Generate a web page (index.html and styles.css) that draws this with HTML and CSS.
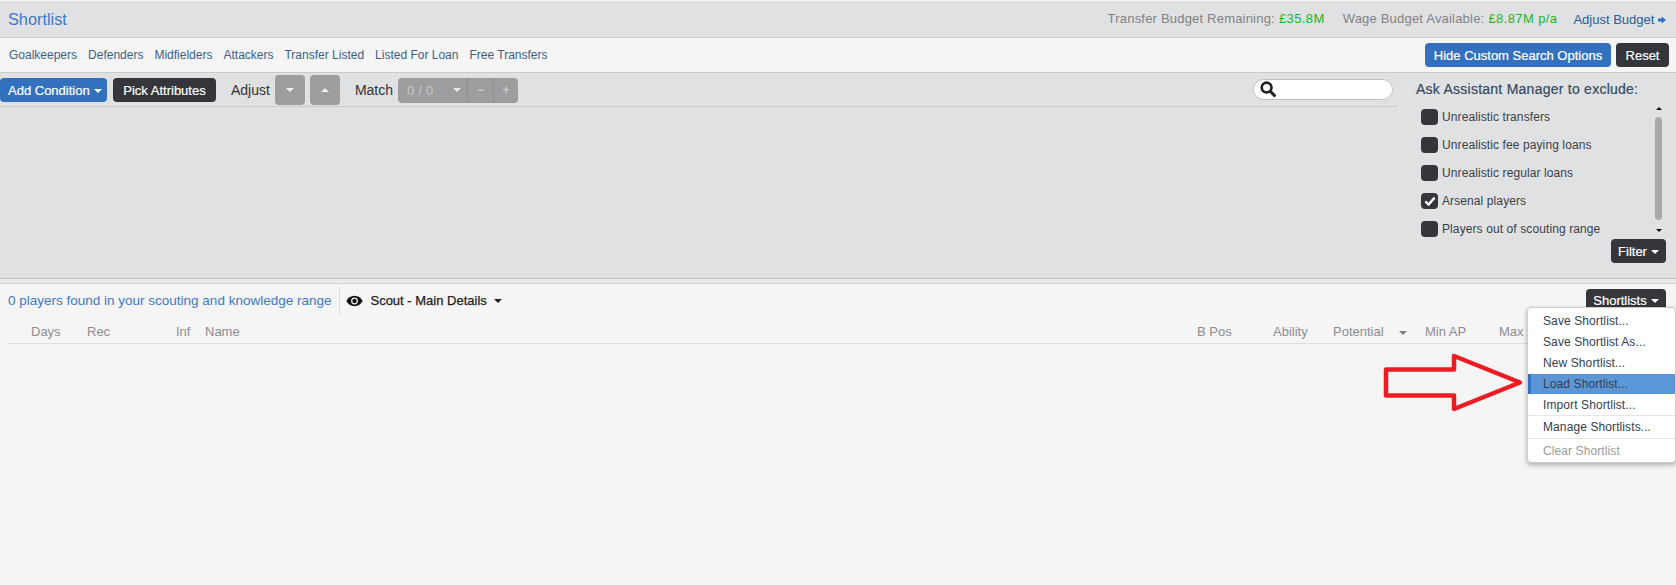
FILE: index.html
```html
<!DOCTYPE html>
<html lang="en">
<head>
<meta charset="utf-8">
<title>Shortlist</title>
<link rel="stylesheet" href="styles.css">
</head>
<body>
<div class="page">
  <header class="top">
    <a class="title">Shortlist</a>
    <div class="budget">
      <span class="lbl">Transfer Budget Remaining:</span><span class="money m1">£35.8M</span>
      <span class="lbl l2">Wage Budget Available:</span><span class="money m1">£8.87M p/a</span>
      <a class="adjust">Adjust Budget <svg class="adj-arrow" viewBox="0 0 8 8" width="8" height="8"><path d="M0 2.6h3.6V0.4L8 4 3.6 7.6V5.4H0z"/></svg></a>
    </div>
  </header>
  <nav class="tabs">
    <a>Goalkeepers</a><a>Defenders</a><a>Midfielders</a><a>Attackers</a><a>Transfer Listed</a><a>Listed For Loan</a><a>Free Transfers</a>
    <span class="tabs-right">
      <button class="btn blue hide-btn">Hide Custom Search Options</button>
      <button class="btn dark reset-btn">Reset</button>
    </span>
  </nav>
  <section class="filter">
    <div class="filter-main">
      <div class="toolbar">
        <button class="btn blue add-btn">Add Condition <i class="caret"></i></button>
        <button class="btn dark pick-btn">Pick Attributes</button>
        <span class="tool-label adjust-label">Adjust</span>
        <button class="sq"><i class="caret"></i></button>
        <button class="sq sq2"><i class="caret up"></i></button>
        <span class="tool-label match-label">Match</span>
        <div class="match">
          <span class="m-val">0 / 0<i class="caret"></i></span>
          <span class="m-op">−</span>
          <span class="m-op">+</span>
        </div>
        <div class="search">
          <svg viewBox="0 0 16 16" width="16" height="16"><circle cx="6.6" cy="6.6" r="4.9" fill="none" stroke="#222" stroke-width="2.7"/><path d="M10.2 10.2l4.2 4.2" stroke="#222" stroke-width="3" stroke-linecap="round"/></svg>
        </div>
      </div>
    </div>
    <aside class="exclude">
      <h3>Ask Assistant Manager to exclude:</h3>
      <div class="ex-body">
        <ul class="ex-list">
          <li><span class="cb"></span>Unrealistic transfers</li>
          <li><span class="cb"></span>Unrealistic fee paying loans</li>
          <li><span class="cb"></span>Unrealistic regular loans</li>
          <li><span class="cb"><svg viewBox="0 0 16 16" width="16" height="16"><path d="M3.4 8.4l3.2 3.2 6-7" fill="none" stroke="#fff" stroke-width="2.4"/></svg></span>Arsenal players</li>
          <li><span class="cb"></span>Players out of scouting range</li>
        </ul>
        <div class="scroll"><i class="s-up"></i><i class="s-thumb"></i><i class="s-down"></i></div>
      </div>
      <button class="btn dark filter-btn">Filter <i class="caret"></i></button>
    </aside>
  </section>
  <div class="split"></div>
  <section class="results">
    <div class="res-bar">
      <span class="found">0 players found in your scouting and knowledge range</span>
      <span class="view">
        <svg viewBox="0 0 18 12" width="17" height="12"><path d="M9 .5C5 .5 2 3 .3 6 2 9 5 11.5 9 11.5S16 9 17.7 6C16 3 13 .5 9 .5z" fill="#111"/><circle cx="9" cy="6" r="3.6" fill="#f5f5f5"/><circle cx="9" cy="6" r="2.3" fill="#111"/></svg>
        <b>Scout - Main Details</b><i class="caret black"></i>
      </span>
      <button class="btn dark lists-btn">Shortlists <i class="caret"></i></button>
    </div>
    <div class="cols">
      <span class="c-days">Days</span><span class="c-rec">Rec</span><span class="c-inf">Inf</span><span class="c-name">Name</span>
      <span class="c-pos">B Pos</span><span class="c-abi">Ability</span><span class="c-pot">Potential</span><i class="caret gray"></i><span class="c-min">Min AP</span><span class="c-max">Max AP</span>
    </div>
  </section>
</div>
<svg class="arrow" viewBox="0 0 146 62" width="146" height="62"><path d="M3 16.5H71V3L137 29.5 71 56V42.5H3z" fill="none" stroke="#ed1c24" stroke-width="4.5" stroke-linejoin="round"/></svg>
<ul class="menu">
  <li>Save Shortlist...</li>
  <li>Save Shortlist As...</li>
  <li>New Shortlist...</li>
  <li class="active">Load Shortlist...</li>
  <li>Import Shortlist...</li>
  <li class="sep manage">Manage Shortlists...</li>
  <li class="sep off">Clear Shortlist</li>
</ul>
</body>
</html>
```
FILE: styles.css
```css
* { box-sizing: border-box; }
html, body { margin: 0; height: 100%; }
body { font-family: "Liberation Sans", Arial, sans-serif; font-size: 13px; background: #f5f5f5; color: #333; overflow: hidden; position: relative; }
.page { display: flex; flex-direction: column; height: 585px; }
ul { list-style: none; margin: 0; padding: 0; }
button { font: inherit; border: 0; padding: 0; }

.top { height: 37px; margin-top: 1px; flex: none; background: #e0e1e3; border-bottom: 1px solid #c9cacb; display: flex; align-items: center; justify-content: space-between; padding: 0 10px 0 8px; }
.title { font-size: 16.3px; color: #3f78c9; margin-top: 1px; }
.budget { display: flex; align-items: center; font-size: 13px; color: #808285; letter-spacing: .2px; margin-top: -1px; }
.money { color: #1cb526; margin-left: 4px; letter-spacing: .4px; }
.l2 { margin-left: 18px; }
.adjust { color: #2a5a9f; margin-left: 16px; font-size: 13px; margin-top: 2px; white-space: nowrap; letter-spacing: 0; }
.adj-arrow { fill: #2f6fc0; }

.tabs { height: 35px; flex: none; background: #f5f5f5; border-bottom: 1px solid #c9cacb; display: flex; align-items: center; padding-left: 9px; gap: 11px; color: #3b5f8a; font-size: 12px; }
.tabs-right { margin-left: auto; display: flex; gap: 5px; padding-right: 7px; }

.btn { height: 24px; border-radius: 4px; color: #fff; font-size: 13px; display: inline-flex; align-items: center; justify-content: center; white-space: nowrap; -webkit-text-stroke: .2px #fff; }
.blue { background: #3371bf; }
.dark { background: #34363c; }
.caret { display: inline-block; width: 0; height: 0; border-left: 4px solid transparent; border-right: 4px solid transparent; border-top: 4px solid #fff; }
.caret.up { border-top: 0; border-bottom: 4px solid #fff; }
.caret.black { border-top-color: #222; }
.caret.gray { border-top-color: #808285; }
.btn .caret { margin-left: 4px; margin-top: 1px; }

.hide-btn { width: 186px; }
.reset-btn { width: 53px; }

.filter { height: 205px; flex: none; background: #e0e1e3; display: flex; }
.filter-main { width: 1397px; flex: none; }
.toolbar { height: 34px; border-bottom: 1px solid #c9cacb; display: flex; align-items: center; }
.add-btn { width: 107px; margin-top: 1px; justify-content: flex-start; padding-left: 8px; }
.pick-btn { width: 103px; margin-left: 6px; margin-top: 1px; }
.tool-label { font-size: 14px; color: #333; }
.adjust-label { margin-left: 15px; }
.match-label { margin-left: 15px; }
.sq { width: 30px; height: 30px; background: #9c9d9f; border-radius: 4px; margin-left: 5px; display: flex; align-items: center; justify-content: center; margin-top: 1px; }
.sq .caret { opacity: .85; }
.sq2 { margin-left: 5px; }
.match { margin-left: 5px; width: 120px; height: 25px; margin-top: 1px; background: #9c9d9f; border-radius: 4px; display: flex; color: #c9cacc; font-size: 13px; letter-spacing: .2px; }
.m-val { width: 70px; padding: 0 6px 0 9px; display: flex; align-items: center; justify-content: space-between; border-right: 1px solid #8d8e90; }
.m-val .caret { opacity: .8; }
.m-op { width: 25px; display: flex; align-items: center; justify-content: center; font-weight: bold; font-size: 12px; }
.m-op + .m-op { border-left: 1px solid #8d8e90; }
.search { margin-left: auto; margin-right: 4px; margin-top: -1px; width: 140px; height: 21px; background: #fff; border: 1px solid #bfc0c2; border-radius: 11px; display: flex; align-items: center; padding-left: 6px; }

.exclude { flex: 1; position: relative; padding-left: 19px; }
.exclude h3 { margin: 0; font-size: 14px; font-weight: normal; color: #34495e; height: 30px; line-height: 32px; letter-spacing: .25px; -webkit-text-stroke: .2px #34495e; }
.ex-body { display: flex; height: 140px; }
.ex-list { width: 239px; padding-left: 5px; }
.ex-list li { height: 28px; display: flex; align-items: center; color: #3a3f47; font-size: 12px; letter-spacing: .1px; }
.cb { width: 17px; height: 16px; background: #34363c; border-radius: 4px; margin-right: 4px; flex: none; display: flex; align-items: center; justify-content: center; }
.scroll { width: 7px; height: 126px; margin-top: 3px; display: flex; flex-direction: column; align-items: center; justify-content: space-between; }
.s-up { border-left: 3px solid transparent; border-right: 3px solid transparent; border-bottom: 3px solid #111; margin-top: 1px; }
.s-thumb { width: 7px; height: 103px; background: #a8a9ab; border-radius: 4px; margin-bottom: 3px; }
.s-down { border-left: 3px solid transparent; border-right: 3px solid transparent; border-top: 3px solid #111; }
.filter-btn { position: absolute; left: 214px; top: 166px; width: 55px; }

.split { height: 6px; flex: none; background: #e9eaeb; border-top: 1px solid #bdbec0; border-bottom: 1px solid #cfd0d1; }

.results { flex: 1; background: #f5f5f5; }
.res-bar { height: 33px; display: flex; align-items: center; padding: 0 10px 0 8px; }
.found { color: #3f78c9; font-size: 13.5px; padding-right: 8px; }
.view { display: flex; align-items: center; height: 27px; border-left: 1px solid #d9d9d9; padding-left: 6px; color: #222; }
.view b { font-weight: normal; margin-left: 7px; -webkit-text-stroke: .25px #222; }
.view .caret { margin-left: 7px; margin-top: 1px; }
.lists-btn { margin-left: auto; width: 80px; }
.cols { height: 27px; margin-left: 8px; border-bottom: 1px solid #dfdfdf; display: flex; align-items: center; color: #8b8d90; font-size: 13px; padding-top: 3px; white-space: nowrap; }
.c-days { margin-left: 23px; width: 56px; }
.c-rec { width: 89px; }
.c-inf { width: 29px; }
.c-name { width: 992px; }
.c-pos { width: 76px; }
.c-abi { width: 60px; }
.c-pot { width: 66px; }
.cols .caret { margin-right: 18px; margin-top: 2px; }
.c-min { width: 74px; }

.arrow { position: absolute; left: 1383px; top: 353px; }

.menu { position: absolute; left: 1527px; top: 307px; width: 149px; height: 156px; background: #fff; border: 1px solid #ccc; border-radius: 4px; box-shadow: 0 2px 5px rgba(0,0,0,.3); padding-top: 2px; color: #34404f; font-size: 12px; letter-spacing: .1px; }
.menu li { height: 21px; display: flex; align-items: center; padding-left: 15px; }
.menu .active { background: #5b96d6; border-left: 3px solid #3371bf; padding-left: 12px; height: 20px; margin-top: 1px; padding-bottom: 1px; }
.menu .sep { border-top: 1px solid #e6e6e6; }
.menu .manage { height: 23px; }
.menu .off { color: #9a9c9f; height: 24px; }
```
